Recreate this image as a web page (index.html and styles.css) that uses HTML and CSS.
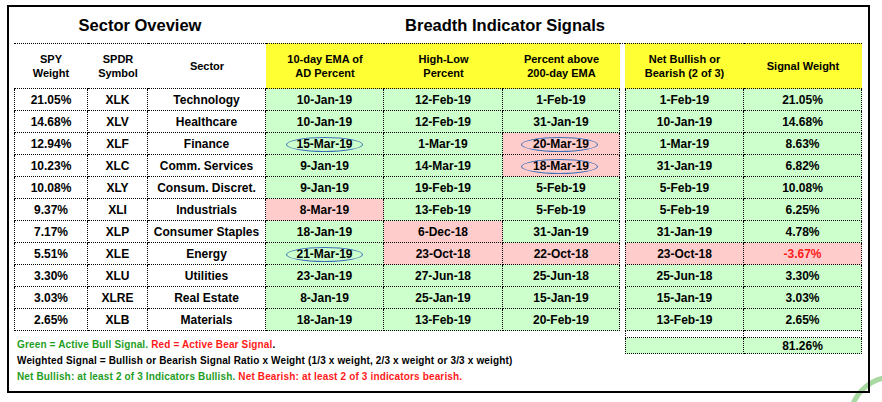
FILE: index.html
```html
<!DOCTYPE html>
<html lang="en">
<head>
<meta charset="utf-8">
<title>Sector Breadth Signals</title>
<link rel="stylesheet" href="styles.css">
</head>
<body>
<svg class="logo-arc" width="42" height="42" viewBox="0 0 42 42"><circle cx="53" cy="60" r="43" fill="none" stroke="#a9d9a3" stroke-width="5"/></svg>
<div class="frame">
  <div class="sheet">
    <div class="title t1">Sector Oveview</div>
    <div class="title t2">Breadth Indicator Signals</div>

    <div class="h first">SPY<br>Weight</div>
    <div class="h">SPDR<br>Symbol</div>
    <div class="h">Sector</div>
    <div class="h y">10-day EMA of<br>AD Percent</div>
    <div class="h y">High-Low<br>Percent</div>
    <div class="h y">Percent above<br>200-day EMA</div>
    <div class="hg"></div>
    <div class="h y">Net Bullish or<br>Bearish (2 of 3)</div>
    <div class="h y">Signal Weight</div>

    <div class="c l first">21.05%</div><div class="c">XLK</div><div class="c">Technology</div><div class="c g">10-Jan-19</div><div class="c g">12-Feb-19</div><div class="c g">1-Feb-19</div><div class="gap"></div><div class="c l g">1-Feb-19</div><div class="c g">21.05%</div>

    <div class="c l first">14.68%</div><div class="c">XLV</div><div class="c">Healthcare</div><div class="c g">10-Jan-19</div><div class="c g">12-Feb-19</div><div class="c g">31-Jan-19</div><div class="gap"></div><div class="c l g">10-Jan-19</div><div class="c g">14.68%</div>

    <div class="c l first">12.94%</div><div class="c">XLF</div><div class="c">Finance</div><div class="c g">15-Mar-19<span class="oval"></span></div><div class="c g">1-Mar-19</div><div class="c p">20-Mar-19<span class="oval shift"></span></div><div class="gap"></div><div class="c l g">1-Mar-19</div><div class="c g">8.63%</div>

    <div class="c l first">10.23%</div><div class="c">XLC</div><div class="c">Comm. Services</div><div class="c g">9-Jan-19</div><div class="c g">14-Mar-19</div><div class="c p">18-Mar-19<span class="oval shift"></span></div><div class="gap"></div><div class="c l g">31-Jan-19</div><div class="c g">6.82%</div>

    <div class="c l first">10.08%</div><div class="c">XLY</div><div class="c">Consum. Discret.</div><div class="c g">9-Jan-19</div><div class="c g">19-Feb-19</div><div class="c g">5-Feb-19</div><div class="gap"></div><div class="c l g">5-Feb-19</div><div class="c g">10.08%</div>

    <div class="c l first">9.37%</div><div class="c">XLI</div><div class="c">Industrials</div><div class="c p">8-Mar-19</div><div class="c g">13-Feb-19</div><div class="c g">5-Feb-19</div><div class="gap"></div><div class="c l g">5-Feb-19</div><div class="c g">6.25%</div>

    <div class="c l first">7.17%</div><div class="c">XLP</div><div class="c">Consumer Staples</div><div class="c g">18-Jan-19</div><div class="c p">6-Dec-18</div><div class="c g">31-Jan-19</div><div class="gap"></div><div class="c l g">31-Jan-19</div><div class="c g">4.78%</div>

    <div class="c l first">5.51%</div><div class="c">XLE</div><div class="c">Energy</div><div class="c g">21-Mar-19<span class="oval"></span></div><div class="c p">23-Oct-18</div><div class="c p">22-Oct-18</div><div class="gap"></div><div class="c l p">23-Oct-18</div><div class="c p neg">-3.67%</div>

    <div class="c l first">3.30%</div><div class="c">XLU</div><div class="c">Utilities</div><div class="c g">23-Jan-19</div><div class="c g">27-Jun-18</div><div class="c g">25-Jun-18</div><div class="gap"></div><div class="c l g">25-Jun-18</div><div class="c g">3.30%</div>

    <div class="c l first">3.03%</div><div class="c">XLRE</div><div class="c">Real Estate</div><div class="c g">8-Jan-19</div><div class="c g">25-Jan-19</div><div class="c g">15-Jan-19</div><div class="gap"></div><div class="c l g">15-Jan-19</div><div class="c g">3.03%</div>

    <div class="c l first">2.65%</div><div class="c">XLB</div><div class="c">Materials</div><div class="c g">18-Jan-19</div><div class="c g">13-Feb-19</div><div class="c g">20-Feb-19</div><div class="gap"></div><div class="c l g">13-Feb-19</div><div class="c g">2.65%</div>

    <div class="legend">
      <div><span class="bull">Green = Active Bull Signal.</span> <span class="bear">Red = Active Bear Signal</span>.</div>
      <div>Weighted Signal = Bullish or Bearish Signal Ratio x Weight (1/3 x weight, 2/3 x weight or 3/3 x weight)</div>
      <div><span class="bull">Net Bullish: at least 2 of 3 Indicators Bullish.</span> <span class="bear">Net Bearish: at least 2 of 3 indicators bearish.</span></div>
    </div>

    <div class="gap"></div><div class="c l"></div><div class="c"></div>
    <div class="gap"></div><div class="c l g"></div><div class="c g">81.26%</div>
  </div>
</div>
</body>
</html>
```

FILE: styles.css
```css
html, body {
  margin: 0;
  padding: 0;
  background: #ffffff;
}

body {
  width: 882px;
  height: 402px;
  overflow: hidden;
  position: relative;
  font-family: "Liberation Sans", Arial, sans-serif;
  font-weight: bold;
  color: #000;
}

.logo-arc {
  position: absolute;
  left: 840px;
  top: 360px;
}

.frame {
  position: relative;
  margin: 5px 0 0 7px;
  width: 863px;
  height: 388px;
  box-sizing: border-box;
  border: 2px solid #000;
  padding: 0 6px 0 5px;
}

.sheet {
  display: grid;
  grid-template-columns: 74px 60px 118px 118px 119px 117px 5px 119px 118px;
  grid-template-rows: 36px 46px repeat(11, 22px) 7px 16px auto;
}

.title {
  grid-row: 1;
  display: flex;
  align-items: center;
  justify-content: center;
  font-size: 16.5px;
  padding-top: 1px;
}

.t1 { grid-column: 1 / 4; }
.t2 { grid-column: 4 / 9; }

.first { grid-column-start: 1; }

.h {
  box-sizing: border-box;
  border-top: 1px dotted #000;
  border-bottom: 1px dotted #000;
  display: flex;
  align-items: center;
  justify-content: center;
  text-align: center;
  font-size: 11px;
  line-height: 14px;
}

.hg {
  border-top: 1px dotted #000;
}

.y { background: #ffff33; }

.c {
  position: relative;
  box-sizing: border-box;
  border-right: 1px dotted #000;
  border-bottom: 1px dotted #000;
  display: flex;
  align-items: center;
  justify-content: center;
  font-size: 12px;
  white-space: nowrap;
}

.l { border-left: 1px dotted #000; }

.g { background: #ccffcc; }
.p { background: #ffcccc; }
.neg { color: #ff1a1a; }

.oval {
  position: absolute;
  left: 50%;
  top: 4px;
  width: 77px;
  height: 15px;
  margin-left: -38.5px;
  box-sizing: border-box;
  border: 1px solid #3d70b5;
  border-radius: 50%;
}

.oval.shift { margin-left: -40px; }

.legend {
  grid-column: 1 / 7;
  grid-row: 14 / 17;
  padding: 6px 0 0 3px;
  font-size: 10px;
  line-height: 16px;
  letter-spacing: 0.15px;
  white-space: nowrap;
}

.bull { color: #1f9e1f; }
.bear { color: #ff1a1a; }
```
